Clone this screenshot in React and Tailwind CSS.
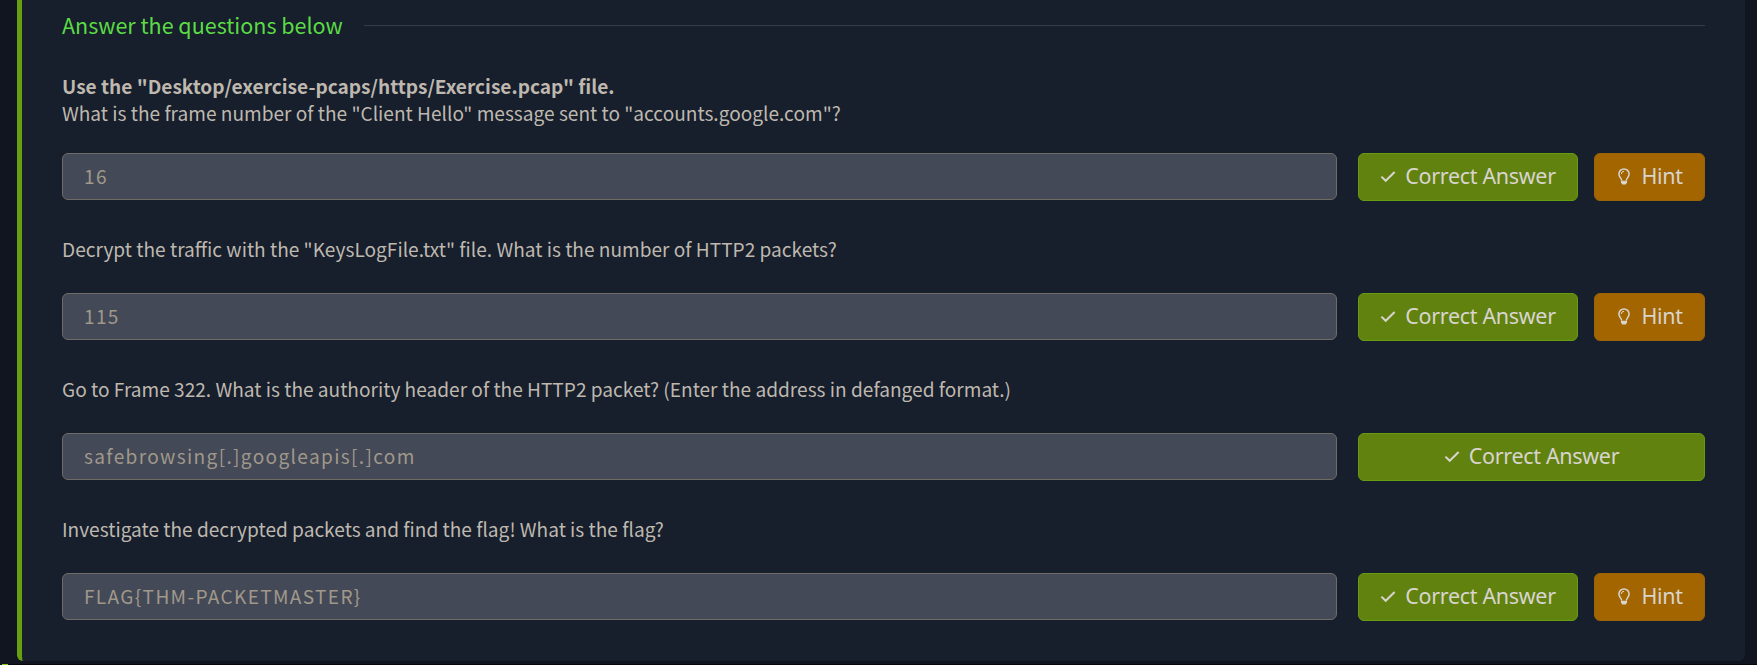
const questions = [
  {
    lead: 'Use the "Desktop/exercise-pcaps/https/Exercise.pcap" file.',
    text: 'What is the frame number of the "Client Hello" message sent to "accounts.google.com"?',
    answer: "16",
    hint: true,
  },
  {
    text: 'Decrypt the traffic with the "KeysLogFile.txt" file. What is the number of HTTP2 packets?',
    answer: "115",
    hint: true,
  },
  {
    text: "Go to Frame 322. What is the authority header of the HTTP2 packet? (Enter the address in defanged format.)",
    answer: "safebrowsing[.]googleapis[.]com",
    hint: false,
  },
  {
    text: "Investigate the decrypted packets and find the flag! What is the flag?",
    answer: "FLAG{THM-PACKETMASTER}",
    hint: true,
  },
];

function CheckIcon() {
  return (
    <svg className="h-4 w-4 shrink-0" viewBox="0 0 16 16" fill="none" stroke="currentColor" strokeWidth="2">
      <path d="M1.4 7.6 L5.7 11.8 L14.6 3" />
    </svg>
  );
}

function BulbIcon() {
  return (
    <svg className="mb-px h-[17px] w-3 shrink-0" viewBox="0 0 12 17" fill="none" stroke="currentColor" strokeWidth="1.5">
      <path d="M3.7 12.6 C3.6 10.2 0.9 9.2 0.9 6 A5.1 5.1 0 0 1 11.1 6 C11.1 9.2 8.4 10.2 8.3 12.6" />
      <path d="M3.3 6 A2.7 2.7 0 0 1 6 3.3" strokeWidth="1" />
      <path d="M3 12.8 H9 V14.4 L7.8 16.6 H4.2 L3 14.4 Z" fill="currentColor" stroke="none" />
    </svg>
  );
}

function Question({ lead, text, answer, hint }) {
  return (
    <section className="flex h-[140px] flex-col justify-end">
      <div className="text-[19.1px] leading-[27px] whitespace-nowrap text-[#beb8af]">
        {lead && <p className="font-bold">{lead}</p>}
        <p>{text}</p>
      </div>
      <div className={lead ? "mt-[26px] flex h-12 items-start" : "mt-[30px] flex h-12 items-start"}>
        <div className="flex h-[47px] w-[1275px] items-center rounded-md border border-[#6f6b66] bg-[#434956] px-[21px] pb-px text-[19.1px] tracking-[1.33px] text-[#a0988b]">
          {answer}
        </div>
        <div className="ml-[21px] flex h-12 flex-1 gap-4 font-['Noto_Sans','Open_Sans',sans-serif] text-[21.5px] tracking-[-0.32px] text-[#d8d4ce]">
          <button className="flex flex-1 items-center justify-center gap-[9px] rounded-md border border-[#669c12] bg-[#61820e]">
            <CheckIcon />
            <span className="pb-px">Correct Answer</span>
          </button>
          {hint && (
            <button className="flex w-[111px] items-center justify-center gap-[11px] rounded-md border border-[#9a6304] bg-[#a26500] pl-0.5">
              <BulbIcon />
              <span className="pb-px">Hint</span>
            </button>
          )}
        </div>
      </div>
    </section>
  );
}

export default function App() {
  return (
    <div className="relative h-[665px] w-[1757px] overflow-hidden bg-[#11151f] pr-3 pl-[17px] font-['Noto_Sans_CJK_SC',sans-serif]">
      <main className="h-[661px] rounded-b-md border-l-[5px] border-[#689f0f] bg-[#171e2c] pr-10 pl-10">
        <header className="flex h-[61px] items-start gap-[21px]">
          <h1 className="mt-[9px] text-[21.5px] leading-8 whitespace-nowrap text-[#5bdb45]">Answer the questions below</h1>
          <div className="mt-[25px] h-px flex-1 bg-[#353b4b]" />
        </header>
        {questions.map((q) => (
          <Question key={q.answer} {...q} />
        ))}
      </main>
      <div className="absolute bottom-0 left-0 h-px w-full bg-[#06070c]" />
      <div className="absolute bottom-0 left-0.5 h-px w-1.5 bg-[#88cc14]" />
    </div>
  );
}
